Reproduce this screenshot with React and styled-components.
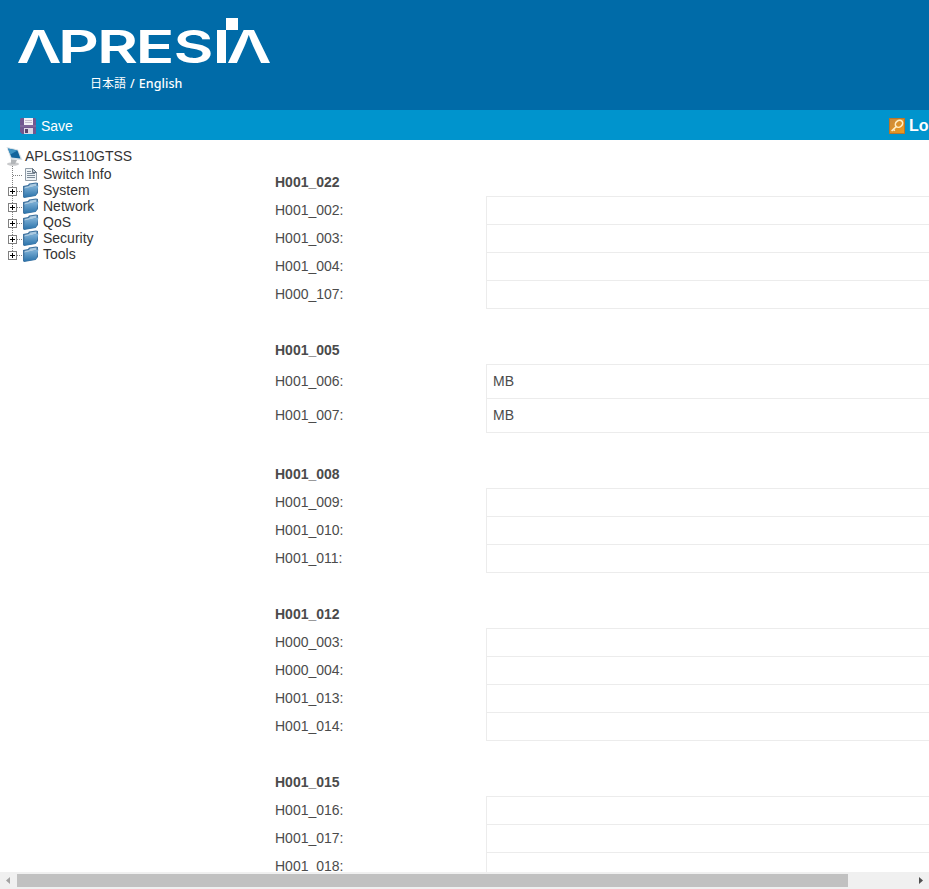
import React from "react";
import styled, { createGlobalStyle } from "styled-components";

const GlobalStyle = createGlobalStyle`
  * { box-sizing: border-box; }
  html, body { margin: 0; background: #fff; overflow: hidden; }
  body { font-family: "Liberation Sans", Arial, sans-serif; font-size: 14px; color: #4b4b4b; }
`;

const Page = styled.div`
  display: flex;
  flex-direction: column;
  width: 100%;
  height: 889px;
  overflow: hidden;
`;

const Header = styled.header`
  flex: none;
  height: 110px;
  padding: 14px 0 0 14px;
  background: #006ba8;
`;

const Wordmark = styled.svg`
  display: block;
  width: 260px;
  height: 56px;
  overflow: visible;
  fill: #fff;
  font-family: Inter, "Liberation Sans", sans-serif;
  font-size: 45.5px;
  font-weight: 600;
`;

const Languages = styled.nav`
  display: flex;
  gap: 4px;
  padding-left: 76px;
  margin-top: 4px;
  line-height: 20px;
  color: #fff;
  font-family: "Noto Sans", "Noto Sans CJK JP", sans-serif;
  font-size: 12px;
  font-weight: 500;
`;

const Japanese = styled.span`
  font-weight: 400;
`;

const English = styled.span`
  font-size: 12.5px;
  letter-spacing: 0.1px;
`;

const Toolbar = styled.div`
  flex: none;
  display: flex;
  justify-content: space-between;
  align-items: center;
  height: 30px;
  padding: 2px 0 0 20px;
  background: #0094cd;
  color: #fff;
`;

const ToolAction = styled.div`
  display: flex;
  align-items: center;
  gap: ${(p) => (p.$strong ? 4 : 5)}px;
  width: ${(p) => (p.$strong ? "40px" : "auto")};
  white-space: nowrap;
  font-size: ${(p) => (p.$strong ? 16 : 14)}px;
  font-weight: ${(p) => (p.$strong ? 700 : 400)};
`;

const Icon = styled.svg`
  flex: none;
  display: block;
  width: ${(p) => p.$size || 16}px;
  height: ${(p) => p.$size || 16}px;
  overflow: visible;
`;

const Body = styled.div`
  flex: 1;
  min-height: 0;
  display: flex;
  overflow: hidden;
`;

const Sidebar = styled.aside`
  flex: none;
  width: 275px;
  padding: 6px 0 0 6px;
  color: #333;
`;

const TreeRoot = styled.div`
  display: flex;
  align-items: center;
  height: 20px;
  gap: 1px;
`;

const TreeRow = styled.div`
  display: flex;
  align-items: center;
  height: 16px;
  line-height: 16px;
  gap: 3px;
`;

const TreeIcons = styled.span`
  display: flex;
  gap: 1px;
  width: 34px;
`;

const Content = styled.main`
  flex: 1;
  min-width: 0;
  padding-top: 28px;
  overflow: hidden;
`;

const Group = styled.section`
  margin-bottom: 28px;
`;

const GroupTitle = styled.h2`
  margin: 0;
  height: 28px;
  line-height: 28px;
  font-size: 14px;
  font-weight: 700;
`;

const Row = styled.div`
  display: grid;
  grid-template-columns: 211px 1fr;
  height: ${(p) => p.$height || 28}px;
  line-height: ${(p) => p.$height || 28}px;
`;

const Value = styled.div`
  height: calc(100% + 1px);
  padding-left: 6px;
  border: solid #ececec;
  border-width: 1px 0 1px 1px;
  line-height: ${(p) => (p.$height || 28) - 2}px;
`;

const Scrollbar = styled.div`
  flex: none;
  display: flex;
  align-items: center;
  justify-content: space-between;
  height: 17px;
  background: #f0f0f0;
`;

const Thumb = styled.div`
  width: 831px;
  height: 13px;
  margin-right: auto;
  background: #c1c1c1;
`;

function Logo() {
  return (
    <Wordmark viewBox="14 14 260 56" aria-label="APRESIA">
      <text x="16.5" y="63" textLength="45" lengthAdjust="spacingAndGlyphs">Λ</text>
      <text x="58" y="63" textLength="41" lengthAdjust="spacingAndGlyphs">P</text>
      <text x="97" y="63" textLength="41" lengthAdjust="spacingAndGlyphs">R</text>
      <text x="135.5" y="63" textLength="39" lengthAdjust="spacingAndGlyphs">E</text>
      <text x="173.5" y="63" textLength="40" lengthAdjust="spacingAndGlyphs">S</text>
      <rect x="217" y="30" width="9" height="33" />
      <rect x="226" y="18" width="12" height="12" />
      <text x="226.5" y="63" textLength="45" lengthAdjust="spacingAndGlyphs">Λ</text>
    </Wordmark>
  );
}

function SaveIcon() {
  return (
    <Icon viewBox="0 0 16 16">
      <path d="M0 1L1 0H15L16 1V16H2L0 14Z" fill="#71568f" />
      <path d="M4 0H13V7H4Z" fill="#f2eff6" />
      <path d="M5 2.5H12M5 4.5H12" stroke="#c5bdcf" />
      <path d="M0 8H16" stroke="#8d76a3" />
      <path d="M4 10H13V16H4Z" fill="#dcd6e3" />
      <path d="M5 11H8V15H5Z" fill="#59446e" />
    </Icon>
  );
}

function KeyIcon() {
  return (
    <Icon viewBox="0 0 16 16">
      <defs>
        <linearGradient id="key" x2="1" y2="1">
          <stop stopColor="#c98a3c" />
          <stop offset="1" stopColor="#f09a1c" />
        </linearGradient>
      </defs>
      <rect x="0.5" y="0.5" width="15" height="15" fill="url(#key)" stroke="#b9762a" />
      <ellipse cx="10" cy="5.8" rx="3.9" ry="3.2" transform="rotate(-40 10 5.8)" fill="none" stroke="#ffeec4" strokeWidth="1.6" />
      <path d="M7.2 8.6L2.6 13M4.2 11.2L5.8 12.8" fill="none" stroke="#ffeec4" strokeWidth="1.6" />
    </Icon>
  );
}

function ComputerIcon() {
  return (
    <Icon $size={18} viewBox="0 0 18 18">
      <ellipse cx="7" cy="17" rx="6" ry="1.8" fill="#c9cacc" />
      <path d="M5 12L11 13L9 17H5Z" fill="#b2b5b8" />
      <path d="M0.5 0L12 2.5L16.5 13L5 12.5Z" fill="#d5dfe6" />
      <path d="M2 1.5L11.5 3.5L14.5 11.5L5.5 10.5Z" fill="#12649c" />
      <path d="M2 1.5L11.5 3.5L4.3 7.5Z" fill="#3f93c2" />
    </Icon>
  );
}

function PageIcon() {
  return (
    <Icon viewBox="0 0 16 16">
      <path d="M2.5 2.5H9.5L13.5 6.5V14.5H2.5Z" fill="#eef3f7" stroke="#8f9ba6" />
      <path d="M9.5 2.5V6.5H13.5Z" fill="#bfcbd5" stroke="#64717e" />
      <path d="M4 5.5H8M4 7.5H12M4 9.5H12M4 11.5H12" stroke="#7d8b98" />
    </Icon>
  );
}

function FolderIcon() {
  return (
    <Icon viewBox="0 0 16 16">
      <defs>
        <linearGradient id="folder" x2="0" y2="1">
          <stop stopColor="#82b4d9" />
          <stop offset="1" stopColor="#2a72aa" />
        </linearGradient>
      </defs>
      <path d="M0 4L5 3L6 1.5L13 0.5L15 1V11L12.5 14L1 16L0 15Z" fill="#3f73a0" />
      <path d="M1.5 5L6 4L7 2.5L13.5 1.5V4L1.5 7Z" fill="#a9c9e0" />
      <path d="M1.5 6.5L15.5 3.5L13 13.5L1 15.5Z" fill="url(#folder)" />
    </Icon>
  );
}

function Branch({ expandable, last }) {
  return (
    <Icon viewBox="0 0 16 16">
      <path d={last ? "M6.5 0V9" : "M6.5 0V16"} stroke="#808080" strokeDasharray="1 1" />
      <path d={expandable ? "M7 9.5H16" : "M7 9.5H17"} stroke="#808080" strokeDasharray="1 1" />
      {expandable && (
        <>
          <rect x="2.5" y="5.5" width="8" height="8" fill="#fff" stroke="#808080" />
          <path d="M4 9.5H9M6.5 7V12" stroke="#000" />
        </>
      )}
    </Icon>
  );
}

const menu = ["Switch Info", "System", "Network", "QoS", "Security", "Tools"];

const groups = [
  { title: "H001_022", rows: ["H001_002:", "H001_003:", "H001_004:", "H000_107:"] },
  { title: "H001_005", rows: ["H001_006:", "H001_007:"], unit: "MB", height: 34 },
  { title: "H001_008", rows: ["H001_009:", "H001_010:", "H001_011:"] },
  { title: "H001_012", rows: ["H000_003:", "H000_004:", "H001_013:", "H001_014:"] },
  { title: "H001_015", rows: ["H001_016:", "H001_017:", "H001_018:"] },
];

export default function App() {
  return (
    <>
      <GlobalStyle />
      <Page>
        <Header>
          <Logo />
          <Languages>
            <Japanese>日本語</Japanese>
            <span>/</span>
            <English>English</English>
          </Languages>
        </Header>
        <Toolbar>
          <ToolAction><SaveIcon />Save</ToolAction>
          <ToolAction $strong><KeyIcon />Lo</ToolAction>
        </Toolbar>
        <Body>
          <Sidebar>
            <TreeRoot><ComputerIcon />APLGS110GTSS</TreeRoot>
            {menu.map((label, i) => (
              <TreeRow key={label}>
                <TreeIcons>
                  <Branch expandable={i > 0} last={i === menu.length - 1} />
                  {i === 0 ? <PageIcon /> : <FolderIcon />}
                </TreeIcons>
                {label}
              </TreeRow>
            ))}
          </Sidebar>
          <Content>
            {groups.map((g) => (
              <Group key={g.title}>
                <GroupTitle>{g.title}</GroupTitle>
                {g.rows.map((label) => (
                  <Row key={label} $height={g.height}>
                    <span>{label}</span>
                    <Value $height={g.height}>{g.unit}</Value>
                  </Row>
                ))}
              </Group>
            ))}
          </Content>
        </Body>
        <Scrollbar>
          <Icon $size={17} viewBox="0 0 17 17"><path d="M6 8.5L10 5V12Z" fill="#a3a3a3" /></Icon>
          <Thumb />
          <Icon $size={17} viewBox="0 0 17 17"><path d="M11 8.5L7 5V12Z" fill="#505050" /></Icon>
        </Scrollbar>
      </Page>
    </>
  );
}
